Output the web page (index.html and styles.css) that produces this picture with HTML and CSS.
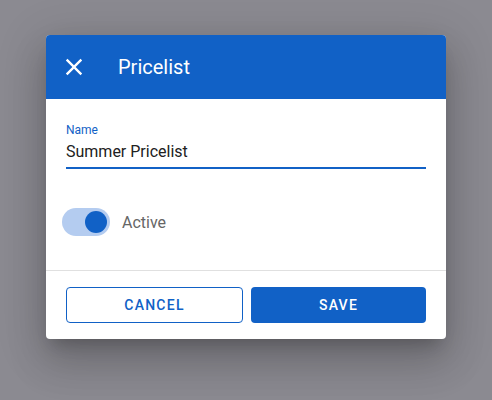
FILE: index.html
```html
<!DOCTYPE html>
<html>
<head>
<meta charset="utf-8">
<link rel="stylesheet" href="styles.css">
</head>
<body>
<div class="dialog">
  <header class="toolbar">
    <button class="close" aria-label="Close">
      <svg viewBox="0 0 24 24" width="28" height="28"><path fill="#fff" d="M19 6.41L17.59 5 12 10.59 6.41 5 5 6.41 10.59 12 5 17.59 6.41 19 12 13.41 17.59 19 19 17.59 13.41 12z"/></svg>
    </button>
    <h1 class="title">Pricelist</h1>
  </header>
  <div class="content">
    <div class="field">
      <label class="label">Name</label>
      <div class="input">Summer Pricelist</div>
    </div>
    <div class="toggle-row">
      <span class="track"><span class="thumb"></span></span>
      <span class="toggle-label">Active</span>
    </div>
  </div>
  <div class="divider"></div>
  <div class="actions">
    <button class="btn btn-outline">CANCEL</button>
    <button class="btn btn-primary">SAVE</button>
  </div>
</div>
</body>
</html>
```
FILE: styles.css
```css
html, body {
  margin: 0;
  padding: 0;
}
body {
  background: #8b8a91;
  height: 400px;
  font-family: Roboto, "Liberation Sans", sans-serif;
  overflow: hidden;
}
.dialog {
  width: 400px;
  margin: 35px auto 0;
  background: #fff;
  border-radius: 4px;
  overflow: hidden;
  box-shadow: 0 11px 15px -7px rgba(0,0,0,.2), 0 24px 38px 3px rgba(0,0,0,.14), 0 9px 46px 8px rgba(0,0,0,.12);
}
.toolbar {
  height: 64px;
  background: #1161c6;
  display: flex;
  align-items: center;
  padding: 0 0 0 8px;
}
.close {
  width: 40px;
  height: 40px;
  padding: 0;
  border: 0;
  background: transparent;
  display: flex;
  align-items: center;
  justify-content: center;
}
.close svg {
  display: block;
}
.title {
  margin: 0 0 0 24px;
  font-size: 20px;
  font-weight: 400;
  color: #fff;
  line-height: 24px;
}
.content {
  padding: 23px 20px 34px;
}
.label {
  display: block;
  font-size: 12px;
  line-height: 16px;
  color: #1161c6;
}
.input {
  margin-top: 2px;
  font-size: 16px;
  line-height: 24px;
  color: #212121;
  padding-bottom: 3px;
  border-bottom: 2px solid #1161c6;
}
.toggle-row {
  margin-top: 39px;
  margin-left: -4px;
  display: flex;
  align-items: center;
  height: 28px;
}
.track {
  position: relative;
  width: 48px;
  height: 28px;
  border-radius: 14px;
  background: #b4ccf0;
}
.thumb {
  position: absolute;
  left: 23px;
  top: 3px;
  width: 22px;
  height: 22px;
  border-radius: 50%;
  background: #1161c6;
}
.toggle-label {
  margin-left: 12px;
  font-size: 16px;
  color: #666;
}
.divider {
  height: 1px;
  background: #e0e0e0;
}
.actions {
  display: flex;
  gap: 8px;
  padding: 16px 20px;
}
.btn {
  flex: 1;
  height: 36px;
  border-radius: 4px;
  font-family: Roboto, "Liberation Sans", sans-serif;
  font-size: 14px;
  font-weight: 500;
  letter-spacing: 1.25px;
  padding: 0;
}
.btn-outline {
  background: #fff;
  color: #1161c6;
  border: 1px solid #1161c6;
}
.btn-primary {
  background: #1161c6;
  color: #fff;
  border: 0;
}
```
